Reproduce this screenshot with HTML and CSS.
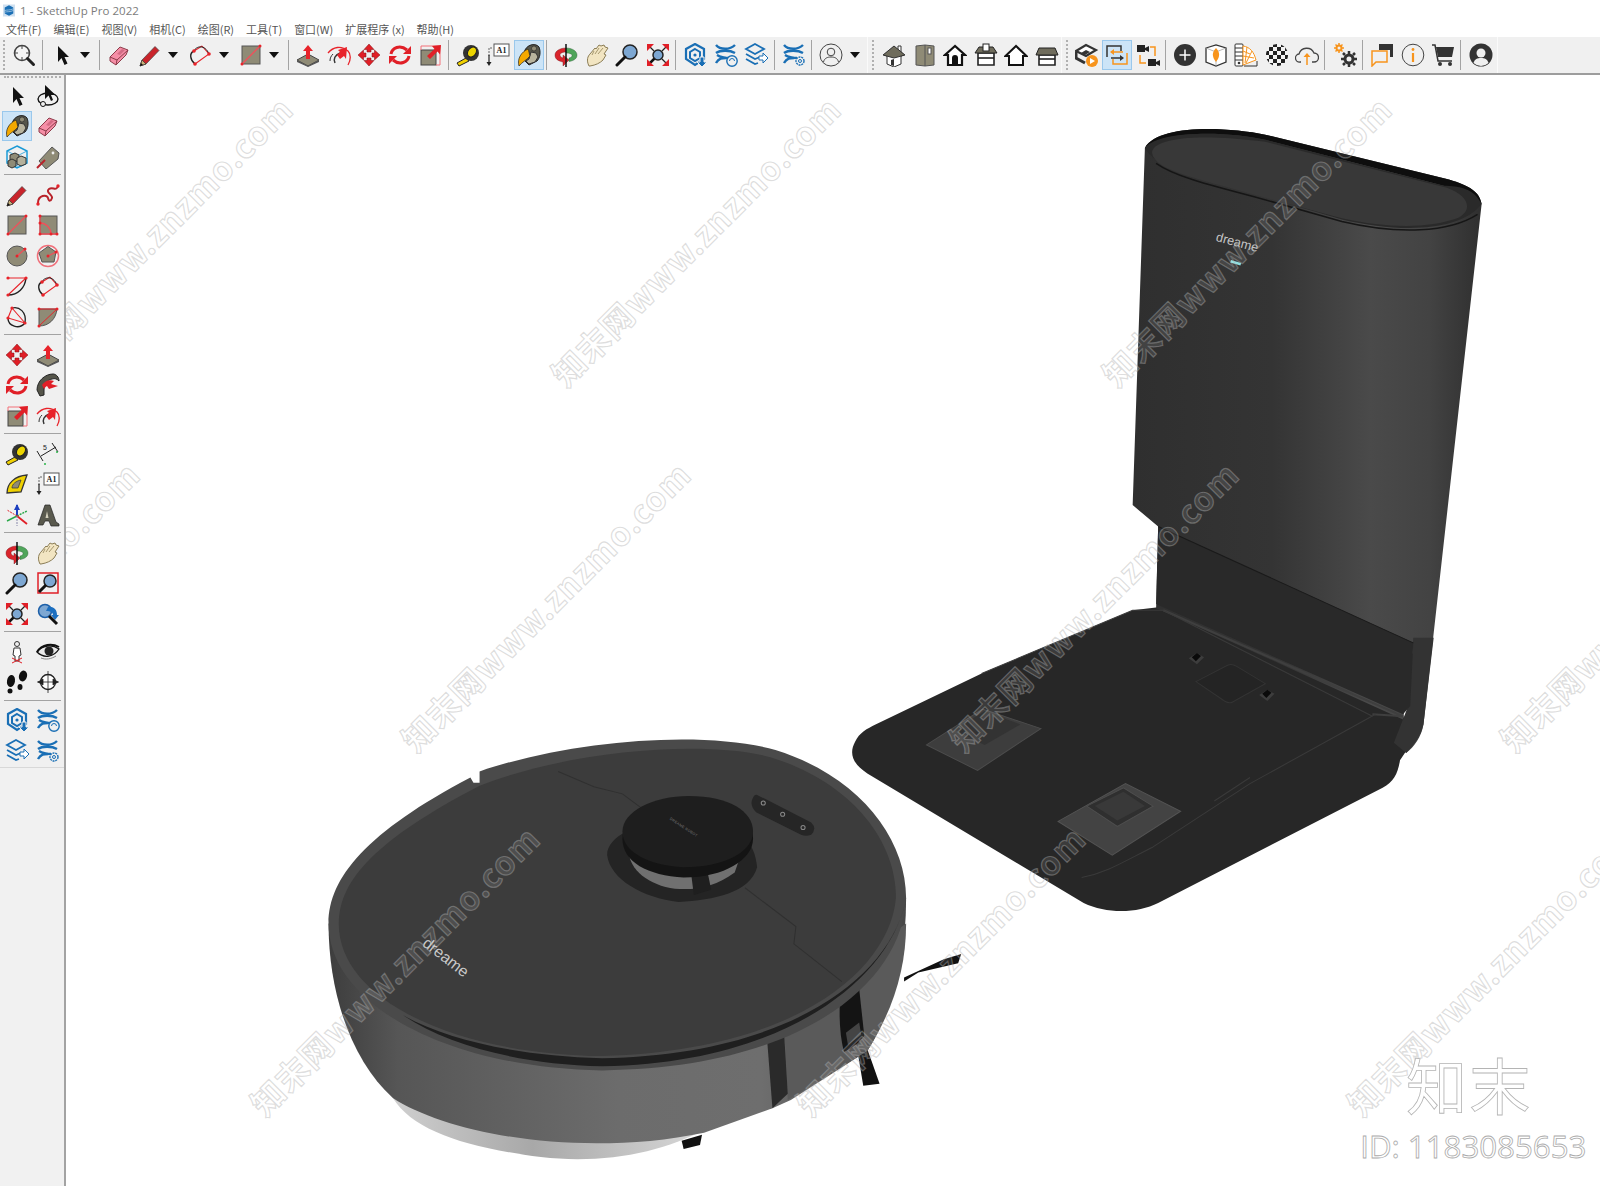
FILE: index.html
```html
<!DOCTYPE html>
<html lang="zh">
<head>
<meta charset="utf-8">
<title>1 - SketchUp Pro 2022</title>
<link rel="stylesheet" href="styles.css">
</head>
<body>
<svg class="sprite" aria-hidden="true">
<defs>
<symbol id="i-search" viewBox="0 0 24 24"><circle cx="10" cy="10" r="7.500" fill="#f4f4f4" stroke="#444" stroke-width="1.600"/><path d="M10 3v3M10 14v3M3 10h3M14 10h3" stroke="#444"/><path d="M15.500 15.500l6 6" stroke="#222" stroke-width="3" stroke-linecap="round"/></symbol>
<symbol id="i-select" viewBox="0 0 24 24"><path d="M8 3v16l3.500-4 3 7 3-1.500-3-6.500h4.500z" fill="#111"/></symbol>
<symbol id="i-eraser" viewBox="0 0 24 24"><path d="M3 14L13 4l8 3-2 5-10 10-6-4z" fill="#f58ea6" stroke="#8d3b4a"/><path d="M3 14l7 3 11-10M10 17l-1 5" fill="none" stroke="#8d3b4a"/><path d="M10 11l5-5 3 1-5 5z" fill="#d46c85"/></symbol>
<symbol id="i-pencil" viewBox="0 0 24 24"><path d="M2 23l2-6L17 3.500 21 7.500 8 21z" fill="#c9242b" stroke="#444" stroke-width=".7"/><path d="M2 23l2-6 4 4z" fill="#c8b27a" stroke="#333" stroke-width=".7"/><path d="M2 23l1-3 2 2z" fill="#111"/></symbol>
<symbol id="i-arc" viewBox="0 0 24 24"><path d="M7 21C2 17 1 10 6 8" fill="none" stroke="#222" stroke-width="1.400"/><path d="M6 8l8-5M14 3L21 11L7 21" fill="none" stroke="#e8232a" stroke-width="1.100"/><path d="M6 8C8 3 17 1 21 11" fill="none" stroke="#222" stroke-width="1"/><g fill="#e8232a"><circle cx="6" cy="8" r="1.800"/><circle cx="21" cy="11" r="1.800"/><circle cx="7" cy="21" r="1.800"/></g></symbol>
<symbol id="i-arc2" viewBox="0 0 24 24"><path d="M3 21C13 21 20 14 21 4" fill="none" stroke="#222" stroke-width="1.400"/><path d="M3 4h18L3 21" fill="none" stroke="#e8232a" stroke-width="1.100"/><g fill="#e8232a"><circle cx="3" cy="4" r="1.600"/><circle cx="21" cy="4" r="1.600"/><circle cx="3" cy="21" r="1.600"/></g></symbol>
<symbol id="i-arc3" viewBox="0 0 24 24"><path d="M3 13C3 21 14 25 20 18" fill="none" stroke="#222" stroke-width="1.400"/><path d="M7 3L20 18M7 3L3 13l17 5" fill="none" stroke="#e8232a" stroke-width="1.100"/><path d="M7 3c7-2 15 4 13 15" fill="none" stroke="#222" stroke-width="1.300"/><g fill="#e8232a"><circle cx="7" cy="3" r="1.600"/><circle cx="20" cy="18" r="1.600"/><circle cx="3" cy="13" r="1.600"/></g></symbol>
<symbol id="i-pie" viewBox="0 0 24 24"><path d="M3 21V4h18C20 14 13 21 3 21z" fill="#8f8b76" stroke="#555"/><path d="M3 4h18L3 21" fill="none" stroke="#e8232a"/><g fill="#e8232a"><circle cx="3" cy="4" r="1.500"/><circle cx="21" cy="4" r="1.500"/><circle cx="3" cy="21" r="1.500"/></g></symbol>
<symbol id="i-rect" viewBox="0 0 24 24"><rect x="3" y="3" width="18" height="18" fill="#8f8b76" stroke="#555"/><path d="M3 21L21 3" stroke="#f0505a" stroke-width="1.300"/><circle cx="3" cy="21" r="1.500" fill="#e8232a"/><circle cx="21" cy="3" r="1.500" fill="#e8232a"/></symbol>
<symbol id="i-rrect" viewBox="0 0 24 24"><rect x="4" y="3" width="17" height="18" fill="#8f8b76" stroke="#555"/><path d="M4 3v18h17M4 10c6 0 11 5 11 11" fill="none" stroke="#f0505a" stroke-width="1.300"/><g fill="#e8232a"><circle cx="4" cy="3" r="1.500"/><circle cx="4" cy="21" r="1.500"/><circle cx="21" cy="21" r="1.500"/><circle cx="15" cy="21" r="1.500"/><circle cx="4" cy="10" r="1.500"/></g></symbol>
<symbol id="i-circle" viewBox="0 0 24 24"><circle cx="12" cy="12" r="10" fill="#8f8b76" stroke="#555"/><path d="M12 12l8-7" stroke="#f0505a" stroke-width="1.300"/><circle cx="12" cy="12" r="1.500" fill="#e8232a"/><circle cx="20" cy="5" r="1.500" fill="#e8232a"/></symbol>
<symbol id="i-poly" viewBox="0 0 24 24"><circle cx="12" cy="12" r="10.500" fill="none" stroke="#f0707a" stroke-width="1.500"/><path d="M12 2.500l8 5.500-2 10H6L3 9z" fill="#8f8b76" stroke="#555"/><path d="M12 12l8-4" stroke="#f0505a" stroke-width="1.300"/><circle cx="12" cy="12" r="1.500" fill="#e8232a"/><circle cx="20" cy="8" r="1.500" fill="#e8232a"/></symbol>
<symbol id="i-free" viewBox="0 0 24 24"><path d="M2 20c0-8 9-9 10-5s3 3 4 0-7-6-3-9 7 3 9-3" fill="none" stroke="#b8222a" stroke-width="2"/><circle cx="2" cy="21" r="1.700" fill="#e8232a"/><circle cx="22" cy="3" r="1.700" fill="#e8232a"/></symbol>
<symbol id="i-push" viewBox="0 0 24 24"><path d="M1 17l11-6 11 6-11 6z" fill="#8f8b76" stroke="#444"/><path d="M1 17v2l11 5 11-5v-2l-11 6z" fill="#555"/><path d="M12 2l-5 6h3v8h4V8h3z" fill="#e8232a"/></symbol>
<symbol id="i-follow" viewBox="0 0 24 24"><path d="M1 10c5-6 13-8 20-2 3 3 3 9 0 14" fill="none" stroke="#e8232a" stroke-width="1.300"/><path d="M8 20c-2-4 0-8 5-10" fill="none" stroke="#333" stroke-width="1.500"/><path d="M3 18c0-3 1-5 3-7" fill="none" stroke="#333"/><path d="M20 4l-9 3 2 2-3 3 3 4 4-3 2 3z" fill="#e8232a"/></symbol>
<symbol id="i-move" viewBox="0 0 24 24"><g fill="#e01f27" stroke="#7d1015" stroke-width=".5"><path d="M12 1L7 6.500h3V9h4V6.500h3zM12 23l-5-5.500h3V15h4v2.500h3zM1 12l5.500-5v3H9v4H6.500v3zM23 12l-5.500-5v3H15v4h2.500v3z"/></g></symbol>
<symbol id="i-rotate" viewBox="0 0 24 24"><g fill="none" stroke="#e01f27" stroke-width="3"><path d="M3 11C4 5 12 1 19 7"/><path d="M21 13c-1 6-9 10-16 4"/></g><path d="M23 3v8h-8zM1 21v-8h8z" fill="#e01f27"/></symbol>
<symbol id="i-scale" viewBox="0 0 24 24"><rect x="3" y="7" width="15" height="15" fill="#8f8b76" stroke="#444"/><path d="M3 7V3h19v19H18" fill="none" stroke="#f27079"/><path d="M23 2l-9 1 2.500 3L9 13l3 3 7.500-7.500 2.500 3z" fill="#e01f27"/></symbol>
<symbol id="i-tape" viewBox="0 0 24 24"><path d="M1 20l9-5 3 3-10 5z" fill="#f0d000" stroke="#222"/><circle cx="15" cy="10" r="8" fill="#333"/><ellipse cx="16" cy="9" rx="4" ry="5.500" transform="rotate(35 16 9)" fill="#ecd500" stroke="#222"/></symbol>
<symbol id="i-text" viewBox="0 0 24 24"><path d="M3 13V5h4" fill="none" stroke="#666" stroke-dasharray="2 1"/><rect x="8" y="1" width="15" height="12" fill="#fff" stroke="#555"/><text x="15.500" y="10" class="icon-a1">A1</text><path d="M3 12v8" stroke="#222" stroke-width="1.200"/><path d="M.5 19h5L3 23z" fill="#222"/></symbol>
<symbol id="i-paint" viewBox="0 0 24 24"><path d="M8 7c3-6 11-7 14-3 2 5 1 11-2 14l-8 4-6-6z" fill="#55554a" stroke="#222"/><path d="M14 9l5 1 2 4-3 5-6 2-3-3 3-2z" fill="#b8b49e" stroke="#333"/><circle cx="17" cy="5.500" r="2.500" fill="#8f8b76" stroke="#222" stroke-width=".6"/><path d="M11 6C4 9 0 16 2 23c3-4 8-6 11-10-1-3-1-5-2-7z" fill="#f4a900" stroke="#222" stroke-width=".7"/></symbol>
<symbol id="i-orbit" viewBox="0 0 24 24"><path d="M12 5C6 5 1 8 1 12c0 4 3 6 8 7v4l6-6-6-5v3c-2-.5-3-2-3-3 0-2 3-3 6-3z" fill="#d9242c" stroke="#6a1216" stroke-width=".4"/><path d="M12 5c6 0 11 3 11 7 0 4-4 6-8 6.500v-3.500c3-.5 3-2 3-3s-3-2-6-2z" fill="#4fa55a" stroke="#24552c" stroke-width=".4"/><path d="M12 1v23" stroke="#111" stroke-width="1.500"/></symbol>
<symbol id="i-pan" viewBox="0 0 24 24"><path d="M4 23C1 17 3 13 5 11L10 5l1 1 3-4 2 1 3-1 1 2 3 1-4 6 2 1-3 5c-3 3-7 5-13 6z" fill="#f2e5c2" stroke="#8b7d56"/><path d="M9 8l-2 4M14 5l-4 6M18 5l-5 6" stroke="#a6986f" fill="none"/></symbol>
<symbol id="i-zoom" viewBox="0 0 24 24"><circle cx="15" cy="9" r="7" fill="#7da7d2" stroke="#222" stroke-width="1.500"/><path d="M10 14l-8 8" stroke="#111" stroke-width="3" stroke-linecap="round"/></symbol>
<symbol id="i-zoomw" viewBox="0 0 24 24"><rect x="2" y="2" width="20" height="20" fill="none" stroke="#e01f27" stroke-width="1.500"/><circle cx="14" cy="10" r="6" fill="#7da7d2" stroke="#222" stroke-width="1.500"/><path d="M10 14l-7 7" stroke="#111" stroke-width="3"/></symbol>
<symbol id="i-zoomx" viewBox="0 0 24 24"><path d="M9 15l-6 6" stroke="#111" stroke-width="2.500"/><path d="M8 8L4 4M16 8l4-4M16 16l4 4" stroke="#222" stroke-width="1.200"/><circle cx="12" cy="12" r="5" fill="#7da7d2" stroke="#222" stroke-width="1.500"/><path d="M1 1h7L1 8zM23 1h-7l7 7zM23 23h-7l7-7zM1 23v-7l7 7z" fill="#e01f27"/></symbol>
<symbol id="i-zoomp" viewBox="0 0 24 24"><circle cx="9" cy="9" r="6.500" fill="#7da7d2" stroke="#1c5fa8" stroke-width="1.500"/><path d="M12 5c6-1 9 3 9 8h2l-4 5-4-5h2c0-2-2-4-7-4z" fill="#1c6fc0"/><path d="M13 14l8 8" stroke="#111" stroke-width="3"/></symbol>
<symbol id="i-orbit2" viewBox="0 0 24 24"><ellipse cx="12" cy="15" rx="10" ry="6" fill="none" stroke="#111" stroke-width="1.400"/><circle cx="7" cy="20" r="2.500" fill="#f0f0f0" stroke="#111"/><path d="M9 1v14l3.500-3.500L15 17l2-1-2-5h4.500z" fill="#111"/></symbol>
<symbol id="i-comp" viewBox="0 0 24 24"><path d="M12 1l10 5v12l-10 5-10-5V6z" fill="none" stroke="#1b9ad6" stroke-width="1.500"/><path d="M2 6l10 5 10-5M12 11v12" stroke="#1b9ad6" fill="none" stroke-width=".8"/><path d="M5 10l5-2 4 2v5l-4 2-5-2z" fill="#8f8b76" stroke="#333"/><path d="M3 16l4-2 4 2v5l-4 2-4-2z" fill="#8f8b76" stroke="#333"/><path d="M12 13l4-2 5 2v6l-5 2-4-2z" fill="#b5b19c" stroke="#333"/></symbol>
<symbol id="i-tag" viewBox="0 0 24 24"><path d="M3 16L16 2l7 6-1 6L10 24z" fill="#8f8b76" stroke="#555"/><circle cx="17" cy="8" r="1.400" fill="#eee"/><path d="M1 23l8-8" stroke="#b8222a" stroke-width="2"/></symbol>
<symbol id="i-offset" viewBox="0 0 24 24"><path d="M1 17C1 8 9 1 17 1c3 0 6 3 6 7-2-2-4-3-7-2-5 1-8 5-8 11v5l-4 1z" fill="#55554a" stroke="#222"/><path d="M6 12c3-4 7-6 12-4l-3 3 7 2-9 3-2-3c-2 1-2 2-3 3z" fill="#e01f27"/></symbol>
<symbol id="i-dim" viewBox="0 0 24 24"><path d="M5 14l15-9M1 9l6 10M16 1l6 9" stroke="#222" fill="none"/><text x="7" y="8" class="icon-dim">5</text><circle cx="21" cy="10" r="1" fill="#2bb44a"/><circle cx="9" cy="22" r="1" fill="#2bb44a"/></symbol>
<symbol id="i-proto" viewBox="0 0 24 24"><path d="M2 21C2 11 10 4 22 3L16 20z" fill="#efd100" stroke="#333" stroke-width="1.300"/><path d="M7 16c0-4 4-7 9-8l-3 8z" fill="#8f8b76" stroke="#333" stroke-width=".7"/></symbol>
<symbol id="i-axes" viewBox="0 0 24 24"><path d="M12 13V2" stroke="#1c3fbf" stroke-width="2"/><path d="M12 1L9 7h6z" fill="#1c3fbf"/><path d="M12 13l10-5" stroke="#2ba84a" stroke-dasharray="2 1" stroke-width="1.500"/><path d="M12 13l-10 5" stroke="#2ba84a" stroke-width="1.500"/><path d="M12 13l10 8" stroke="#e01f27" stroke-width="1.800"/><path d="M12 13L2 7" stroke="#e01f27" stroke-dasharray="2 1"/><path d="M12 13v10" stroke="#88a" stroke-dasharray="2 1"/></symbol>
<symbol id="i-3dtext" viewBox="0 0 24 24"><path d="M2 22L9 2h5l6 17 3 2v2h-8l-2-5H9l-2 4z" fill="#5a5a4e" stroke="#222" stroke-width=".7"/><path d="M11 8l1.500 7h-3z" fill="#d4d0bc"/></symbol>
<symbol id="i-walk" viewBox="0 0 24 24"><circle cx="12" cy="4" r="2.500" fill="none" stroke="#333"/><path d="M9 8h6l1 7-2 1v5h-4v-5l-2-1z" fill="#fff" stroke="#333"/><path d="M7 18l10 5M17 18L7 23" stroke="#e01f27"/></symbol>
<symbol id="i-eye" viewBox="0 0 24 24"><path d="M1 12c5-7 15-8 22-3-5 8-15 10-22 3z" fill="#e9e9e9" stroke="#111" stroke-width="1.300"/><circle cx="13" cy="11" r="4.500" fill="#222"/><path d="M1 12C6 4 16 3 23 7" fill="none" stroke="#111" stroke-width="2"/><path d="M5 18c5 2 10 1 15-2" fill="none" stroke="#888"/></symbol>
<symbol id="i-feet" viewBox="0 0 24 24"><ellipse cx="6" cy="11" rx="4" ry="6" fill="#111" transform="rotate(10 6 11)"/><ellipse cx="5" cy="21" rx="2.500" ry="2.500" fill="#111"/><ellipse cx="18" cy="6" rx="4" ry="5.500" fill="#111" transform="rotate(15 18 6)"/><ellipse cx="15" cy="17" rx="2.500" ry="3" fill="#111"/></symbol>
<symbol id="i-pos" viewBox="0 0 24 24"><circle cx="12" cy="12" r="7.500" fill="#fff" stroke="#222" stroke-width="1.300"/><path d="M1 12h22M12 1v22M2 12l5-3v6zM22 12l-5-3v6z" stroke="#222" fill="#222" stroke-width=".8"/></symbol>
<symbol id="i-wh1" viewBox="0 0 24 24"><path d="M12 1l9 5v10l-9 6-9-6V6z" fill="none" stroke="#1a6fb5" stroke-width="2.200"/><path d="M12 6l5 3v6l-5 3-5-3V9z" fill="none" stroke="#1a6fb5" stroke-width="2"/><circle cx="12" cy="12" r="1.600" fill="#1a6fb5"/><path d="M17 14h4v5h3l-5 5-5-5h3z" fill="#1a6fb5" stroke="#f0f0f0"/></symbol>
<symbol id="i-wh2" viewBox="0 0 24 24"><path d="M2 2c4 5 14 5 19 0M2 10c4-3 14-3 19 0M3 12c5 3 10 3 12 3" fill="none" stroke="#1a6fb5" stroke-width="2.400"/><path d="M2 20c3-5 6-5 10-5" fill="none" stroke="#1a6fb5" stroke-width="2.400"/><circle cx="18" cy="18" r="5.200" fill="#f0f0f0" stroke="#1a6fb5" stroke-width="1.400"/><path d="M15.500 18a2.500 2.500 0 0 1 5 0" fill="none" stroke="#1a6fb5"/></symbol>
<symbol id="i-wh3" viewBox="0 0 24 24"><path d="M11 1l9 5-9 5-9-5z" fill="none" stroke="#1a6fb5" stroke-width="1.800"/><path d="M2 11l9 5 5-2M2 16l9 5 3-1" fill="none" stroke="#1a6fb5" stroke-width="1.800"/><path d="M15 13h4v-3l5 5-5 5v-3h-4z" fill="#fff" stroke="#1a6fb5"/></symbol>
<symbol id="i-wh4" viewBox="0 0 24 24"><path d="M2 2c4 5 14 5 19 0M2 10c4-3 14-3 19 0M3 12c5 3 10 3 12 3" fill="none" stroke="#1a6fb5" stroke-width="2.400"/><path d="M2 20c3-5 6-5 10-5" fill="none" stroke="#1a6fb5" stroke-width="2.400"/><circle cx="18" cy="18" r="4" fill="#f0f0f0" stroke="#1a6fb5" stroke-width="1.400" stroke-dasharray="2 .8"/><circle cx="18" cy="18" r="1.500" fill="none" stroke="#1a6fb5"/></symbol>
<symbol id="i-user" viewBox="0 0 24 24"><circle cx="12" cy="12" r="11" fill="none" stroke="#444" stroke-width="1"/><circle cx="12" cy="9" r="3.800" fill="none" stroke="#444"/><path d="M4.500 19c1-4 4-5 7.500-5s6.500 1 7.500 5" fill="none" stroke="#444"/></symbol>
<symbol id="i-h1" viewBox="0 0 24 24"><path d="M2 12l10-8 4 3V3h3v6l3 3-3 1v8l-7 3-7-3v-8z" fill="#fff" stroke="#333"/><path d="M1 12l11-9 11 9-11 3z" fill="#6f6c5c" stroke="#333"/><path d="M9 17l3-1v7l-3-1z" fill="#333"/></symbol>
<symbol id="i-h2" viewBox="0 0 24 24"><path d="M3 3l9-1 9 1v19l-9 1-9-1z" fill="#8f8b76" stroke="#555"/><path d="M12 2v21" stroke="#555"/><rect x="15" y="5" width="3" height="6" fill="#fff" stroke="#555"/></symbol>
<symbol id="i-h3" viewBox="0 0 24 24"><path d="M12 3L2 12h3v10h14V12h3z" fill="#fff" stroke="#111" stroke-width="2.200"/><path d="M9 22v-7a3 3 0 0 1 6 0v7z" fill="#111"/></symbol>
<symbol id="i-h4" viewBox="0 0 24 24"><path d="M4 10h16v12H4z" fill="#fff" stroke="#222" stroke-width="1.600"/><path d="M4 15h16" stroke="#222" stroke-width="1.600"/><path d="M1 10l4-6h14l4 6z" fill="#6f6c5c" stroke="#222"/><rect x="9" y="1" width="6" height="7" fill="#fff" stroke="#222"/></symbol>
<symbol id="i-h5" viewBox="0 0 24 24"><path d="M12 3L1.500 13H5v9h14v-9h3.500z" fill="#fff" stroke="#111" stroke-width="2"/></symbol>
<symbol id="i-h6" viewBox="0 0 24 24"><path d="M4 12h16v10H4z" fill="#fff" stroke="#222" stroke-width="1.600"/><path d="M4 16h16" stroke="#222" stroke-width="1.600"/><path d="M1 12l3-7h16l3 7z" fill="#6f6c5c" stroke="#222"/></symbol>
<symbol id="i-t1" viewBox="0 0 24 24"><path d="M1 8l10-6 10 5-10 6z" fill="#fff" stroke="#333" stroke-width="2.200"/><path d="M1 9v6l9 5" fill="none" stroke="#333" stroke-width="3"/><path d="M6 10l5-3 4 2-5 3z" fill="#333"/><circle cx="17" cy="18" r="6" fill="#f7941d"/><path d="M15 15l5 3-5 3z" fill="#fff"/></symbol>
<symbol id="i-t2" viewBox="0 0 24 24"><path d="M2 14V3h14v5" fill="none" stroke="#333" stroke-width="1.500"/><path d="M22 10v11H8v-5" fill="none" stroke="#f7941d" stroke-width="1.500"/><path d="M6 9h12" stroke="#f7941d" stroke-width="1.500"/><path d="M9 6L5 9l4 3z" fill="#f7941d"/><path d="M6 15h12" stroke="#333" stroke-width="1.500"/><path d="M15 12l4 3-4 3z" fill="#333"/></symbol>
<symbol id="i-t3" viewBox="0 0 24 24"><rect x="1" y="2" width="8" height="7" fill="#222"/><path d="M9 5l4-2v6l-4-2z" fill="#222"/><rect x="12" y="16" width="8" height="7" fill="#222"/><path d="M20 19l4-2v6l-4-2z" fill="#222"/><path d="M14 4h5v9M10 20H4v-8" fill="none" stroke="#f7941d" stroke-width="1.500"/></symbol>
<symbol id="i-add" viewBox="0 0 24 24"><circle cx="12" cy="12" r="11" fill="#333"/><path d="M12 6.500v11M6.500 12h11" stroke="#fff" stroke-width="1.500"/></symbol>
<symbol id="i-t5" viewBox="0 0 24 24"><path d="M2 5l10-3 10 3v14l-10 4-10-4z" fill="#fff" stroke="#333" stroke-width="1.300"/><path d="M2 5l10 4 10-4M12 9v14" fill="none" stroke="#999" stroke-width=".7"/><path d="M12 5c3 3 3.500 6 3 8-.5 3-2 4-3 6-1-2-2.500-3-3-6-.5-2 0-5 3-8z" fill="#f7941d"/></symbol>
<symbol id="i-t6" viewBox="0 0 24 24"><rect x="1" y="1" width="8" height="22" rx="1" fill="#fff" stroke="#333"/><path d="M1 5h8M1 9h8M1 13h8M1 17h8" stroke="#333"/><circle cx="5" cy="20" r="1.300" fill="#333"/><path d="M9 3c7 1 11 6 13 14l-13 5z" fill="#fff" stroke="#f7941d"/><path d="M9 8l7 3M9 13l11 2M13 4l-2 16M18 8L12 20" stroke="#f7941d"/><path d="M10 23h13v-5" fill="none" stroke="#333"/></symbol>
<symbol id="i-t7" viewBox="0 0 24 24"><defs><pattern id="chk" width="8" height="8" patternUnits="userSpaceOnUse"><rect width="8" height="8" fill="#f4f4f4"/><rect width="4" height="4" fill="#222"/><rect x="4" y="4" width="4" height="4" fill="#222"/></pattern></defs><circle cx="12" cy="12" r="11" fill="url(#chk)"/></symbol>
<symbol id="i-t8" viewBox="0 0 24 24"><path d="M6 19H5a4 4 0 0 1-1-8 8 8 0 0 1 15-1 4.500 4.500 0 0 1 0 9h-2" fill="none" stroke="#444" stroke-width="1.300"/><path d="M12 11v11" stroke="#f7941d" stroke-width="1.500"/><path d="M8.500 14L12 10l3.500 4z" fill="#f7941d"/></symbol>
<symbol id="i-gear" viewBox="0 0 24 24"><circle cx="16" cy="16" r="4" fill="none" stroke="#333" stroke-width="3"/><path d="M16 8v3M16 21v3M8 16h3M21 16h3M10 10l2 2M20 20l2 2M22 10l-2 2M12 20l-2 2" stroke="#333" stroke-width="2.500"/><circle cx="6" cy="5" r="2.500" fill="none" stroke="#f7941d" stroke-width="2"/><path d="M6 0v2M6 8v2M1 5h2M9 5h2M2.500 1.500l1.500 1.500M8 7l1.500 1.500M9.500 1.500L8 3M4 7L2.500 8.500" stroke="#f7941d" stroke-width="1.500"/></symbol>
<symbol id="i-chat" viewBox="0 0 24 24"><path d="M9 1h14v13h-3V7H9z" fill="#333"/><path d="M2 8h15v11H6l-4 4z" fill="none" stroke="#f7941d" stroke-width="1.500"/></symbol>
<symbol id="i-info" viewBox="0 0 24 24"><circle cx="12" cy="12" r="10.800" fill="none" stroke="#444" stroke-width="1"/><path d="M12 10v9" stroke="#f7941d" stroke-width="2.200"/><circle cx="12" cy="6.500" r="1.400" fill="#f7941d"/></symbol>
<symbol id="i-cart" viewBox="0 0 24 24"><path d="M1 2h3l3 16h14" fill="none" stroke="#333" stroke-width="1.500"/><path d="M5 4h18l-2 10H7z" fill="#333"/><circle cx="9" cy="21" r="2" fill="#333"/><circle cx="19" cy="21" r="2" fill="#333"/></symbol>
<symbol id="i-acct" viewBox="0 0 24 24"><circle cx="12" cy="12" r="11.500" fill="#333"/><circle cx="12" cy="10" r="4.500" fill="#f0f0f0"/><path d="M4.500 20c1-4 4-5 7.500-5s6.500 1 7.500 5a11 11 0 0 1-15 0z" fill="#f0f0f0"/></symbol>
<symbol id="i-logo" viewBox="0 0 14 14"><rect width="14" height="14" fill="#cfe0f0"/><path d="M7 1l5 2.500v7L7 13l-5-2.500v-7z" fill="#1a6fb5"/><path d="M2 7c3-1 6 0 10-2M2 9c3-1 6 0 10-2" stroke="#dcebf7" stroke-width=".7" fill="none"/></symbol>
<symbol id="i-drop" viewBox="0 0 10 6"><path d="M0 0h10L5 6z" fill="#111"/></symbol>
</defs>
</svg>

<header class="titlebar">
  <svg class="logo"><use href="#i-logo"/></svg>
  <span class="title">1 - SketchUp Pro 2022</span>
</header>
<nav class="menubar">
  <span class="menu">文件(F)</span><span class="menu">编辑(E)</span><span class="menu">视图(V)</span><span class="menu">相机(C)</span><span class="menu">绘图(R)</span><span class="menu">工具(T)</span><span class="menu">窗口(W)</span><span class="menu">扩展程序 (x)</span><span class="menu">帮助(H)</span>
</nav>
<div class="toolbars">
  <div class="toolbar tb-main">
    <i class="grip"></i>
    <span class="btn"><svg class="ico"><use href="#i-search"/></svg></span><i class="sep"></i>
    <span class="btn"><svg class="ico"><use href="#i-select"/></svg></span><span class="drop"><svg class="arrow"><use href="#i-drop"/></svg></span><i class="sep"></i>
    <span class="btn"><svg class="ico"><use href="#i-eraser"/></svg></span>
    <span class="btn"><svg class="ico"><use href="#i-pencil"/></svg></span><span class="drop"><svg class="arrow"><use href="#i-drop"/></svg></span>
    <span class="btn"><svg class="ico"><use href="#i-arc"/></svg></span><span class="drop"><svg class="arrow"><use href="#i-drop"/></svg></span>
    <span class="btn"><svg class="ico"><use href="#i-rect"/></svg></span><span class="drop"><svg class="arrow"><use href="#i-drop"/></svg></span><i class="sep"></i>
    <span class="btn"><svg class="ico"><use href="#i-push"/></svg></span>
    <span class="btn"><svg class="ico"><use href="#i-follow"/></svg></span>
    <span class="btn"><svg class="ico"><use href="#i-move"/></svg></span>
    <span class="btn"><svg class="ico"><use href="#i-rotate"/></svg></span>
    <span class="btn"><svg class="ico"><use href="#i-scale"/></svg></span><i class="sep"></i>
    <span class="btn"><svg class="ico"><use href="#i-tape"/></svg></span>
    <span class="btn"><svg class="ico"><use href="#i-text"/></svg></span>
    <span class="btn active"><svg class="ico"><use href="#i-paint"/></svg></span><i class="sep"></i>
    <span class="btn"><svg class="ico"><use href="#i-orbit"/></svg></span>
    <span class="btn"><svg class="ico"><use href="#i-pan"/></svg></span>
    <span class="btn"><svg class="ico"><use href="#i-zoom"/></svg></span>
    <span class="btn"><svg class="ico"><use href="#i-zoomx"/></svg></span><i class="sep"></i>
    <span class="btn"><svg class="ico"><use href="#i-wh1"/></svg></span>
    <span class="btn"><svg class="ico"><use href="#i-wh2"/></svg></span>
    <span class="btn"><svg class="ico"><use href="#i-wh3"/></svg></span><i class="sep"></i>
    <span class="btn"><svg class="ico"><use href="#i-wh4"/></svg></span><i class="sep"></i>
    <span class="btn"><svg class="ico"><use href="#i-user"/></svg></span><span class="drop"><svg class="arrow"><use href="#i-drop"/></svg></span>
  </div>
  <div class="toolbar tb-house">
    <i class="grip"></i>
    <span class="btn"><svg class="ico"><use href="#i-h1"/></svg></span>
    <span class="btn"><svg class="ico"><use href="#i-h2"/></svg></span>
    <span class="btn"><svg class="ico"><use href="#i-h3"/></svg></span>
    <span class="btn"><svg class="ico"><use href="#i-h4"/></svg></span>
    <span class="btn"><svg class="ico"><use href="#i-h5"/></svg></span>
    <span class="btn"><svg class="ico"><use href="#i-h6"/></svg></span>
  </div>
  <div class="toolbar tb-tools">
    <i class="grip"></i>
    <span class="btn"><svg class="ico"><use href="#i-t1"/></svg></span>
    <span class="btn active"><svg class="ico"><use href="#i-t2"/></svg></span>
    <span class="btn"><svg class="ico"><use href="#i-t3"/></svg></span><i class="sep"></i>
    <span class="btn"><svg class="ico"><use href="#i-add"/></svg></span>
    <span class="btn"><svg class="ico"><use href="#i-t5"/></svg></span>
    <span class="btn"><svg class="ico"><use href="#i-t6"/></svg></span>
    <span class="btn"><svg class="ico"><use href="#i-t7"/></svg></span>
    <span class="btn"><svg class="ico"><use href="#i-t8"/></svg></span><i class="sep"></i>
    <span class="btn"><svg class="ico"><use href="#i-gear"/></svg></span><i class="sep"></i>
    <span class="btn"><svg class="ico"><use href="#i-chat"/></svg></span>
    <span class="btn"><svg class="ico"><use href="#i-info"/></svg></span>
    <span class="btn"><svg class="ico"><use href="#i-cart"/></svg></span><i class="sep"></i>
    <span class="btn"><svg class="ico"><use href="#i-acct"/></svg></span>
  </div>
</div>

<main class="workspace">
  <aside class="sidebar">
    <div class="side-panel">
      <i class="grip-h"></i>
      <div class="tool-grid">
        <span class="btn"><svg class="ico"><use href="#i-select"/></svg></span><span class="btn"><svg class="ico"><use href="#i-orbit2"/></svg></span>
        <span class="btn active"><svg class="ico"><use href="#i-paint"/></svg></span><span class="btn"><svg class="ico"><use href="#i-eraser"/></svg></span>
        <span class="btn"><svg class="ico"><use href="#i-comp"/></svg></span><span class="btn"><svg class="ico"><use href="#i-tag"/></svg></span>
      </div>
      <i class="sep-h"></i>
      <div class="tool-grid">
        <span class="btn"><svg class="ico"><use href="#i-pencil"/></svg></span><span class="btn"><svg class="ico"><use href="#i-free"/></svg></span>
        <span class="btn"><svg class="ico"><use href="#i-rect"/></svg></span><span class="btn"><svg class="ico"><use href="#i-rrect"/></svg></span>
        <span class="btn"><svg class="ico"><use href="#i-circle"/></svg></span><span class="btn"><svg class="ico"><use href="#i-poly"/></svg></span>
        <span class="btn"><svg class="ico"><use href="#i-arc2"/></svg></span><span class="btn"><svg class="ico"><use href="#i-arc"/></svg></span>
        <span class="btn"><svg class="ico"><use href="#i-arc3"/></svg></span><span class="btn"><svg class="ico"><use href="#i-pie"/></svg></span>
      </div>
      <i class="sep-h"></i>
      <div class="tool-grid">
        <span class="btn"><svg class="ico"><use href="#i-move"/></svg></span><span class="btn"><svg class="ico"><use href="#i-push"/></svg></span>
        <span class="btn"><svg class="ico"><use href="#i-rotate"/></svg></span><span class="btn"><svg class="ico"><use href="#i-offset"/></svg></span>
        <span class="btn"><svg class="ico"><use href="#i-scale"/></svg></span><span class="btn"><svg class="ico"><use href="#i-follow"/></svg></span>
      </div>
      <i class="sep-h"></i>
      <div class="tool-grid">
        <span class="btn"><svg class="ico"><use href="#i-tape"/></svg></span><span class="btn"><svg class="ico"><use href="#i-dim"/></svg></span>
        <span class="btn"><svg class="ico"><use href="#i-proto"/></svg></span><span class="btn"><svg class="ico"><use href="#i-text"/></svg></span>
        <span class="btn"><svg class="ico"><use href="#i-axes"/></svg></span><span class="btn"><svg class="ico"><use href="#i-3dtext"/></svg></span>
      </div>
      <i class="sep-h"></i>
      <div class="tool-grid">
        <span class="btn"><svg class="ico"><use href="#i-orbit"/></svg></span><span class="btn"><svg class="ico"><use href="#i-pan"/></svg></span>
        <span class="btn"><svg class="ico"><use href="#i-zoom"/></svg></span><span class="btn"><svg class="ico"><use href="#i-zoomw"/></svg></span>
        <span class="btn"><svg class="ico"><use href="#i-zoomx"/></svg></span><span class="btn"><svg class="ico"><use href="#i-zoomp"/></svg></span>
      </div>
      <i class="sep-h"></i>
      <div class="tool-grid">
        <span class="btn"><svg class="ico"><use href="#i-walk"/></svg></span><span class="btn"><svg class="ico"><use href="#i-eye"/></svg></span>
        <span class="btn"><svg class="ico"><use href="#i-feet"/></svg></span><span class="btn"><svg class="ico"><use href="#i-pos"/></svg></span>
      </div>
      <i class="sep-h"></i>
      <div class="tool-grid">
        <span class="btn"><svg class="ico"><use href="#i-wh1"/></svg></span><span class="btn"><svg class="ico"><use href="#i-wh2"/></svg></span>
        <span class="btn"><svg class="ico"><use href="#i-wh3"/></svg></span><span class="btn"><svg class="ico"><use href="#i-wh4"/></svg></span>
      </div>
    </div>
  </aside>
  <section class="canvas">
    <svg class="scene" viewBox="64.700 73.500 1503.300 1088.800" preserveAspectRatio="none">
      <defs>
        <linearGradient id="bodyGrad" gradientUnits="userSpaceOnUse" x1="322" y1="0" x2="888" y2="0">
          <stop offset="0" stop-color="#3d3d3d"/><stop offset=".12" stop-color="#565656"/><stop offset=".5" stop-color="#6c6c6c"/><stop offset=".75" stop-color="#6e6e6e"/><stop offset="1" stop-color="#474747"/>
        </linearGradient>
        <linearGradient id="towerGrad" gradientUnits="userSpaceOnUse" x1="1110" y1="0" x2="1452" y2="0">
          <stop offset="0" stop-color="#2f2f2f"/><stop offset=".4" stop-color="#343434"/><stop offset=".68" stop-color="#4a4a4a"/><stop offset=".85" stop-color="#434343"/><stop offset="1" stop-color="#2f2f2f"/>
        </linearGradient>
        <linearGradient id="baseGrad" gradientUnits="userSpaceOnUse" x1="385" y1="0" x2="690" y2="0">
          <stop offset="0" stop-color="#cfcfcf"/><stop offset=".45" stop-color="#a8a8a8"/><stop offset="1" stop-color="#d8d8d8"/>
        </linearGradient>
      </defs>

      <!-- docking station -->
      <g class="dock">
        <path d="M1382 730L1372 745C1370 758 1366 766 1355 772L1135 885C1115 895 1085 896 1062 885L850 758C835 748 832 738 838 727C842 718 850 714 858 710L962 660L1110 598L1135 595L1375 700Z" fill="#272727"/>
        <path d="M1122 145L1110 495L1135 516L1133 596L1149 603L1375 705L1385 630L1382 692L1375 730L1378 738C1386 732 1393 722 1395 710L1452 200C1450 188 1440 182 1420 176L1240 132C1200 124 1135 122 1122 145Z" fill="url(#towerGrad)"/>
        <path d="M1385 625L1405 625L1395 710Q1392 724 1378 738L1366 728L1380 692Z" fill="#333"/>
        <path d="M1135 516L1385 630L1382 692L1375 700L1133 592Z" fill="#292929"/>
        <path d="M1135 516L1385 630" class="edge-dark"/>
        <path d="M1140 598L1375 702L1345 700" class="edge-lip"/>
        <path d="M1122 145C1135 122 1200 124 1240 132L1420 176C1440 182 1450 188 1452 200C1445 190 1430 186 1415 182L1240 137C1200 128 1140 128 1122 145Z" fill="#0e0e0e"/>
        <path d="M1122 145C1130 160 1150 166 1230 190L1315 215C1370 228 1430 228 1452 200C1445 185 1430 182 1415 182L1240 137C1200 128 1135 128 1122 145Z" fill="#2a2a2a"/>
        <path d="M1129 150C1129 136 1170 130 1240 139L1418 184C1440 192 1444 206 1428 214C1400 224 1360 224 1315 214L1230 191C1170 174 1132 167 1129 150Z" fill="#383838"/>
        <path d="M1133 160C1150 172 1180 180 1230 193L1315 217C1370 230 1420 228 1448 210" class="edge-line"/>
        <text class="brand" transform="translate(1191 236) rotate(15)">dreame</text>
        <path d="M1206 256l10 3" class="led"/>
        <path d="M1345 702L1140 598L1132 598L1110 598L962 660" class="edge-floor"/>
        <path d="M1348 700L1225 768L1130 830C1100 845 1085 855 1060 860" class="edge-floor"/>
        <path d="M1225 762L1190 785" class="edge-floor"/>
        <path d="M1172 668L1203 652Q1207 650 1212 653L1240 670L1208 688Q1205 690 1200 687Z" fill="#242424" stroke="#333"/>
        <path d="M1165 645l8-5 7 4-7 7z" fill="#3d3d3d"/><path d="M1168 644l5-4 4 3-5 5z" fill="#0a0a0a"/>
        <path d="M1234 681l8-5 7 4-7 7z" fill="#3d3d3d"/><path d="M1237 680l5-4 4 3-5 5z" fill="#0a0a0a"/>
        <path d="M908 730L963 695L1020 714L958 755Z" fill="#3d3d3d" stroke="#4c4c4c"/>
        <path d="M935 715L965 697L1000 710L965 730Z" fill="#333"/>
        <path d="M1037 805L1103 768L1157 795L1090 838Z" fill="#434343" stroke="#535353"/>
        <path d="M1065 790L1101 772L1130 790L1095 810Z" fill="#2f2f2f" stroke="#4e4e4e"/>
        <path d="M1073 790L1101 776L1122 790L1095 804Z" fill="#393939"/>
      </g>

      <!-- robot vacuum -->
      <g class="robot">
        <path d="M385 1076C405 1108 455 1124 530 1134C590 1141 650 1130 692 1106L500 1060Z" fill="url(#baseGrad)"/>
        <path d="M322 905C322 975 345 1040 385 1076C440 1112 570 1135 690 1110L757 1086L775 1078L850 1030C875 990 888 940 888 880Z" fill="url(#bodyGrad)"/>
        <path d="M668 1118L688 1112L686 1122L670 1126Z" fill="#111"/>
        <path d="M886 958L925 940L942 935L939 944L900 953L886 962Z" fill="#111"/>
        <path d="M840 1028L850 1028L862 1062L846 1064Z" fill="#111"/>
        <path d="M768 994L772 1078L850 1030C875 990 888 950 888 905L768 994Z" fill="#5a5a5a"/>
        <path d="M750 996L767 988L772 1072L757 1086Z" fill="#2a2a2a"/>
        <path d="M823 985Q825 972 842 969L847 1015Q840 1025 827 1031Q822 1010 823 985Z" fill="#141414"/>
        <path d="M829 1012L842 1002L844 1014L831 1024Z" fill="#444"/>
        <path d="M322 905C322 860 360 815 461 762L464 767L470 767L470 756C560 725 690 715 760 735C840 760 888 820 888 880C885 960 790 1047 590 1049C440 1047 322 985 322 905Z" fill="#4a4a4a"/>
        <path d="M395 995C440 1025 510 1043 590 1045C770 1042 870 960 887 885C870 960 770 1034 590 1037C510 1035 440 1020 395 995Z" fill="#1f1f1f"/>
        <path d="M332 905C332 862 370 822 470 770C560 735 690 725 755 742C830 765 878 820 878 880C872 950 780 1030 590 1035C445 1033 332 980 332 905Z" fill="#3c3c3c"/>
        <path d="M547 756L582 771L610 778L700 845M730 870L780 908L778 925L825 962" class="seam"/>
        <path d="M595 838C595 815 640 800 680 808C725 805 740 825 742 850C735 875 700 882 665 884C630 880 598 862 595 838Z" fill="#242424"/>
        <path d="M617 840C625 870 680 885 720 855L728 832L620 825Z" fill="#707070"/>
        <path d="M690 838L697 872L680 877L676 846Z" fill="#1f1f1f"/>
        <path d="M610 822C610 800 640 782 675 782C715 782 738 800 738 822C738 842 710 860 670 860C635 858 610 845 610 822Z" fill="#141414"/>
        <path d="M610 815C610 795 640 780 675 780C715 780 738 795 738 815C738 835 710 850 670 850C635 848 610 835 610 815Z" fill="#1e1e1e"/>
        <text class="lidar-label" transform="translate(656 803) rotate(33)">DREAME ROBOT</text>
        <path d="M742 779L795 806Q801 812 795 818Q790 820 785 818L741 796Q735 790 737 784Q739 778 742 779Z" fill="#262626"/>
        <g fill="none" stroke="#888"><circle cx="748" cy="787" r="2"/><circle cx="767" cy="798" r="2"/><circle cx="787" cy="811" r="2"/></g>
        <text class="brand brand-lg" transform="translate(413 926) rotate(38)">dreame</text>
      </g>

      <!-- site watermark -->
      <g class="watermarks">
        <text class="wm" textLength="383" transform="translate(18 381) rotate(-45)">知末网www.znzmo.com</text>
        <text class="wm" textLength="383" transform="translate(555 381) rotate(-45)">知末网www.znzmo.com</text>
        <text class="wm" textLength="383" transform="translate(1095 381) rotate(-45)">知末网www.znzmo.com</text>
        <text class="wm" textLength="383" transform="translate(-132 739) rotate(-45)">知末网www.znzmo.com</text>
        <text class="wm" textLength="383" transform="translate(408 739) rotate(-45)">知末网www.znzmo.com</text>
        <text class="wm" textLength="383" transform="translate(945 739) rotate(-45)">知末网www.znzmo.com</text>
        <text class="wm" textLength="383" transform="translate(1485 739) rotate(-45)">知末网www.znzmo.com</text>
        <text class="wm" textLength="383" transform="translate(260 1096) rotate(-45)">知末网www.znzmo.com</text>
        <text class="wm" textLength="383" transform="translate(795 1096) rotate(-45)">知末网www.znzmo.com</text>
        <text class="wm" textLength="383" transform="translate(1335 1096) rotate(-45)">知末网www.znzmo.com</text>
      </g>
      <text class="stamp-cn" x="1378" y="1088">知末</text>
      <text class="stamp-id" x="1333" y="1135">ID: 1183085653</text>
    </svg>
  </section>
</main>
</body>
</html>
```
FILE: styles.css
```css
* { box-sizing: border-box; }
html, body { margin: 0; height: 100%; overflow: hidden; background: #fff; }
body {
  display: flex;
  flex-direction: column;
  height: 1186px;
  font-family: "Noto Sans CJK SC", "Noto Sans", sans-serif;
  color: #333;
}
.sprite { width: 0; height: 0; position: absolute; }

.titlebar { height: 20px; display: flex; align-items: center; padding-left: 3px; flex: none; background: #fff; }
.logo { width: 12px; height: 13px; }
.title { margin-left: 5px; font: 11.500px "Open Sans", sans-serif; letter-spacing: .05px; color: #7c7c7c; }

.menubar { height: 17px; flex: none; display: flex; align-items: center; padding: 2px 0 0 6px; background: #fff; }
.menu { font-size: 11px; line-height: 15px; color: #555; margin-right: 12px; white-space: nowrap; }

.toolbars { height: 38px; flex: none; display: flex; background: #f0f0f0; border-bottom: 2px solid #9d9d9d; }
.toolbar { flex: none; display: flex; align-items: center; height: 36px; border-right: 1px solid #fafafa; }
.tb-main { width: 868px; }
.tb-house { width: 194px; }
.tb-tools { width: 436px; }
.grip { flex: none; width: 2px; height: 30px; margin: 0 4px 0 4px; border-left: 2px dotted #b0b0b0; }
.tb-main .grip { margin-right: 0; margin-left: 3px; }
.tb-house .grip { margin-right: 4.750px; }
.tb-tools .grip { margin-right: 3.250px; }
.tb-main .btn:first-of-type { margin-left: 4px; }
.sep { flex: none; width: 1px; height: 30px; margin: 0 4px 0 2px; background: #a3a3a3; }

.btn { flex: none; width: 30.500px; height: 30.500px; display: flex; align-items: center; justify-content: center; }
.btn.active { background: #cce4f7; box-shadow: inset 0 0 0 1px #9ac8ec; }
.ico { width: 24px; height: 24px; }
.drop { flex: none; width: 20px; height: 30px; display: flex; align-items: center; padding-left: 3px; }
.arrow { width: 10px; height: 6px; }
.icon-a1 { font: bold 8px "Liberation Serif", serif; text-anchor: middle; fill: #222; }
.icon-dim { font: 7px "Liberation Sans", sans-serif; fill: #222; }

.workspace { flex: 1; display: flex; min-height: 0; }
.sidebar { width: 66px; flex: none; background: #f1f1f1; border-right: 2px solid #a3a3a3; }
.side-panel { height: 692px; padding: 0 0 0 1px; border-bottom: 1px solid #d8d8d8; background: #f0f0f0; }
.grip-h { display: block; height: 2px; margin: 1px 3px 2.250px; border-top: 2px dotted #b0b0b0; }
.tool-grid { display: grid; grid-template-columns: 31.500px 31.500px; grid-auto-rows: 30.500px; justify-items: center; }
.sep-h { display: block; height: 1px; margin: 2.500px 3px 4px; background: #a3a3a3; }

.canvas { flex: 1; min-width: 0; background: #fff; }
.scene { display: block; width: 100%; height: 100%; overflow: hidden; }

.edge-dark { fill: none; stroke: #1a1a1a; stroke-width: 1; }
.edge-lip { fill: none; stroke: #3f3f3f; stroke-width: 2; }
.edge-line { fill: none; stroke: #161616; stroke-width: 1.500; }
.edge-floor { fill: none; stroke: #3a3a3a; stroke-width: 1; }
.seam { fill: none; stroke: #303030; stroke-width: 1; }
.led { fill: none; stroke: #8fe0e0; stroke-width: 2.500; }
.brand { font: 12.500px "Liberation Sans", sans-serif; fill: #c4c4c4; }
.brand-lg { font-size: 15.500px; fill: #c9c9c9; }
.lidar-label { font: 3.500px "Liberation Sans", sans-serif; fill: #777; letter-spacing: .3px; }

.wm {
  font: 700 32px "Noto Sans CJK SC", "Noto Sans", sans-serif;
  fill: rgba(255, 255, 255, .1);
  stroke: rgba(175, 175, 175, .42);
  stroke-width: 1.200;
}
.stamp-cn {
  font: 60px "Noto Sans CJK SC", sans-serif;
  letter-spacing: 2px;
  fill: #fff;
  stroke: #b4b4b4;
  stroke-width: .8;
}
.stamp-id {
  font: 30.600px "Open Sans", sans-serif;
  fill: #fff;
  stroke: #ababab;
  stroke-width: .8;
}
```
